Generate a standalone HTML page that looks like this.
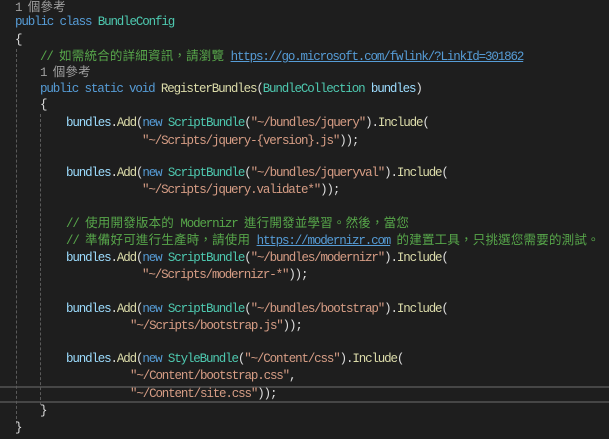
<!DOCTYPE html><html><head><style>
body{margin:0;width:609px;height:439px;background:#1e1e1e;overflow:hidden;position:relative;font-family:"Liberation Mono","Noto Sans CJK TC",monospace;font-size:12.5px;letter-spacing:-1.14px;color:#dcdcdc}
.l{position:absolute;left:0;height:16px;line-height:16px;white-space:pre}
.k{color:#569cd6}.t{color:#4ec9b0}.s{color:#d69d85}.c{color:#57a64a}.m{color:#dcdcaa}.v{color:#9cdcfe}.r{color:#a0a0a0}
.u{color:#569cd6;text-decoration:underline}
.z{letter-spacing:0.2px}
.g{position:absolute;width:0;border-left:1px dashed #5a5a5a}
.cur{position:absolute;left:0;right:0;top:386px;height:13px;border-top:2px solid #464646;border-bottom:2px solid #464646}
</style></head><body>
<div class="cur"></div>
<div class="g" style="left:16px;top:49px;height:375px"></div>
<div class="g" style="left:40px;top:114px;height:291px"></div>
<div class="l r" style="top:0px;left:15px">1 <span class="z">個參考</span></div>
<div class="l" style="top:14px;left:15px"><span class="k">public class</span> <span class="t">BundleConfig</span></div>
<div class="l" style="top:32px;left:15px">{</div>
<div class="l c" style="top:49px;left:40px">// <span class="z">如需統合的詳細資訊，請瀏覽</span> <span class="u">https://go.microsoft.com/fwlink/?LinkId=301862</span></div>
<div class="l r" style="top:65px;left:40px">1 <span class="z">個參考</span></div>
<div class="l" style="top:81px;left:40px"><span class="k">public static void</span> <span class="m">RegisterBundles</span>(<span class="t">BundleCollection</span> <span class="v">bundles</span>)</div>
<div class="l" style="top:97px;left:40px">{</div>
<div class="l" style="top:115px;left:66px"><span class="v">bundles</span>.<span class="m">Add</span>(<span class="k">new</span> <span class="t">ScriptBundle</span>(<span class="s">"~/bundles/jquery"</span>).<span class="m">Include</span>(</div>
<div class="l" style="top:133px;left:142px"><span class="s">"~/Scripts/jquery-{version}.js"</span>));</div>
<div class="l" style="top:165px;left:66px"><span class="v">bundles</span>.<span class="m">Add</span>(<span class="k">new</span> <span class="t">ScriptBundle</span>(<span class="s">"~/bundles/jqueryval"</span>).<span class="m">Include</span>(</div>
<div class="l" style="top:182px;left:142px"><span class="s">"~/Scripts/jquery.validate*"</span>));</div>
<div class="l c" style="top:216px;left:66px">// <span class="z">使用開發版本的</span> Modernizr <span class="z">進行開發並學習。然後，當您</span></div>
<div class="l c" style="top:233px;left:66px">// <span class="z">準備好可進行生產時，請使用</span> <span class="u">https://modernizr.com</span> <span class="z">的建置工具，只挑選您需要的測試。</span></div>
<div class="l" style="top:250px;left:66px"><span class="v">bundles</span>.<span class="m">Add</span>(<span class="k">new</span> <span class="t">ScriptBundle</span>(<span class="s">"~/bundles/modernizr"</span>).<span class="m">Include</span>(</div>
<div class="l" style="top:267px;left:142px"><span class="s">"~/Scripts/modernizr-*"</span>));</div>
<div class="l" style="top:301px;left:66px"><span class="v">bundles</span>.<span class="m">Add</span>(<span class="k">new</span> <span class="t">ScriptBundle</span>(<span class="s">"~/bundles/bootstrap"</span>).<span class="m">Include</span>(</div>
<div class="l" style="top:318px;left:130px"><span class="s">"~/Scripts/bootstrap.js"</span>));</div>
<div class="l" style="top:351px;left:66px"><span class="v">bundles</span>.<span class="m">Add</span>(<span class="k">new</span> <span class="t">StyleBundle</span>(<span class="s">"~/Content/css"</span>).<span class="m">Include</span>(</div>
<div class="l" style="top:368px;left:130px"><span class="s">"~/Content/bootstrap.css"</span>,</div>
<div class="l" style="top:386px;left:130px"><span class="s">"~/Content/site.css"</span>));</div>
<div class="l" style="top:403px;left:40px">}</div>
<div class="l" style="top:420px;left:15px">}</div>
</body></html>
